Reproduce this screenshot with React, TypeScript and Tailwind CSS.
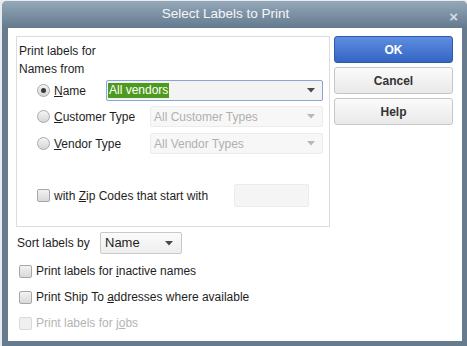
import React from "react"

const Radio = ({ checked = false }: { checked?: boolean }) => (
    <span className="flex w-[13px] h-[13px] items-center justify-center rounded-full border border-[#a9a9a9] bg-gradient-to-b from-[#f4f4f4] to-[#d6d6d6]">
        {checked && <span className="w-[5px] h-[5px] rounded-full bg-[#3a3a3a]" />}
    </span>
)

const Check = ({ disabled = false }: { disabled?: boolean }) => (
    <span
        className={
            disabled
                ? "block w-[13px] h-[13px] rounded-[2px] border border-[#dadada] bg-[#f0f0f0]"
                : "block w-[13px] h-[13px] rounded-[2px] border border-[#a7a7a7] bg-gradient-to-b from-[#f2f2f2] to-[#d9d9d9]"
        }
    />
)

const Arrow = ({ light = false }: { light?: boolean }) => (
    <svg width="8" height="5" viewBox="0 0 8 5" className="shrink-0">
        <path d="M0 0 L8 0 L4 4.5 Z" fill={light ? "#b8b8b8" : "#4a4a4a"} />
    </svg>
)

const Button = ({ label, primary = false }: { label: string; primary?: boolean }) => (
    <div
        className={
            primary
                ? "flex h-[27px] items-center justify-center rounded-[3px] border border-[#2d5aa8] bg-gradient-to-b from-[#5e8ee0] to-[#3565c4] text-[12px] font-bold text-white"
                : "flex h-[27px] items-center justify-center rounded-[3px] border border-[#c6c6c6] bg-gradient-to-b from-[#fbfbfb] to-[#e9e9e9] text-[12px] font-bold text-[#333]"
        }
    >
        {label}
    </div>
)

export default function App() {
    return (
        <div className="w-[467px] h-[346px] bg-[#e9ecef] pl-[2px] pt-[1px] font-['Liberation_Sans',Arial,sans-serif] text-[12px] text-[#1e1e1e]">
            <div className="flex h-full flex-col rounded-t-[5px] bg-[#667b8e]">
                {/* title bar */}
                <div className="relative flex h-[27px] items-center justify-center rounded-t-[5px] bg-gradient-to-b from-[#94a8b9] to-[#647a8e] pr-[18px] text-[13.5px] font-normal text-[#f4f6f8]">
                    Select Labels to Print
                    <span className="absolute right-[9px] top-[5px] text-[15px] font-bold text-[#d4dbe1]">×</span>
                </div>

                {/* body */}
                <div className="ml-[6px] mr-[5px] mb-[5px] flex flex-1 bg-white">
                    <div className="flex w-[322px] flex-col pl-[8px] pt-[8px]">
                        {/* names group */}
                        <div className="flex h-[191px] flex-col border border-[#dcdcdc] pl-[2px] pr-[6px] pt-[5px]">
                            <div className="leading-[18px]">Print labels for</div>
                            <div className="leading-[18px]">Names from</div>

                            <div className="mt-[2px] flex h-[21px] items-center pl-[18px]">
                                <Radio checked />
                                <span className="ml-[4px] w-[52px]"><u>N</u>ame</span>
                                <div className="flex h-[21px] flex-1 items-center justify-between rounded-[2px] border border-[#8aa6d6] bg-[#f3f3f3] pl-[1px] pr-[7px]">
                                    <span className="bg-[#4e9a1e] px-[1px] leading-[15px] text-white">All vendors</span>
                                    <Arrow />
                                </div>
                            </div>

                            <div className="mt-[5px] flex h-[21px] items-center pl-[18px]">
                                <Radio />
                                <span className="ml-[4px] w-[96px]"><u>C</u>ustomer Type</span>
                                <div className="flex h-[21px] flex-1 items-center justify-between rounded-[2px] border border-[#ececec] bg-[#f7f7f7] pl-[3px] pr-[7px] text-[#b0b0b0]">
                                    <span>All Customer Types</span>
                                    <Arrow light />
                                </div>
                            </div>

                            <div className="mt-[6px] flex h-[21px] items-center pl-[18px]">
                                <Radio />
                                <span className="ml-[4px] w-[96px]"><u>V</u>endor Type</span>
                                <div className="flex h-[21px] flex-1 items-center justify-between rounded-[2px] border border-[#ececec] bg-[#f7f7f7] pl-[3px] pr-[7px] text-[#b0b0b0]">
                                    <span>All Vendor Types</span>
                                    <Arrow light />
                                </div>
                            </div>

                            <div className="mt-[30px] flex h-[23px] items-center pl-[18px]">
                                <Check />
                                <span className="ml-[4px] w-[180px]">with <u>Z</u>ip Codes that start with</span>
                                <div className="h-[23px] w-[75px] rounded-[2px] border border-[#ececec] bg-[#f5f5f5]" />
                            </div>
                        </div>

                        <div className="mt-[5px] flex h-[22px] items-center pl-[1px]">
                            <span className="w-[83px]">Sort labels by</span>
                            <div className="flex h-[22px] w-[82px] items-center justify-between rounded-[2px] border border-[#c9c9c9] bg-gradient-to-b from-[#fbfbfb] to-[#eeeeee] pl-[4px] pr-[8px]">
                                <span className="text-[13px]">Name</span>
                                <Arrow />
                            </div>
                        </div>

                        <div className="mt-[10px] flex h-[14px] items-center pl-[3px]">
                            <Check />
                            <span className="ml-[4px]">Print labels for <u>i</u>nactive names</span>
                        </div>
                        <div className="mt-[12px] flex h-[14px] items-center pl-[3px]">
                            <Check />
                            <span className="ml-[4px]">Print Ship To <u>a</u>ddresses where available</span>
                        </div>
                        <div className="mt-[12px] flex h-[14px] items-center pl-[3px] text-[#b4b4b4]">
                            <Check disabled />
                            <span className="ml-[4px]">Print labels for j<u>o</u>bs</span>
                        </div>
                    </div>

                    <div className="ml-[4px] flex w-[119px] flex-col gap-[4px] pt-[8px]">
                        <Button label="OK" primary />
                        <Button label="Cancel" />
                        <Button label="Help" />
                    </div>
                </div>
            </div>
        </div>
    )
}
